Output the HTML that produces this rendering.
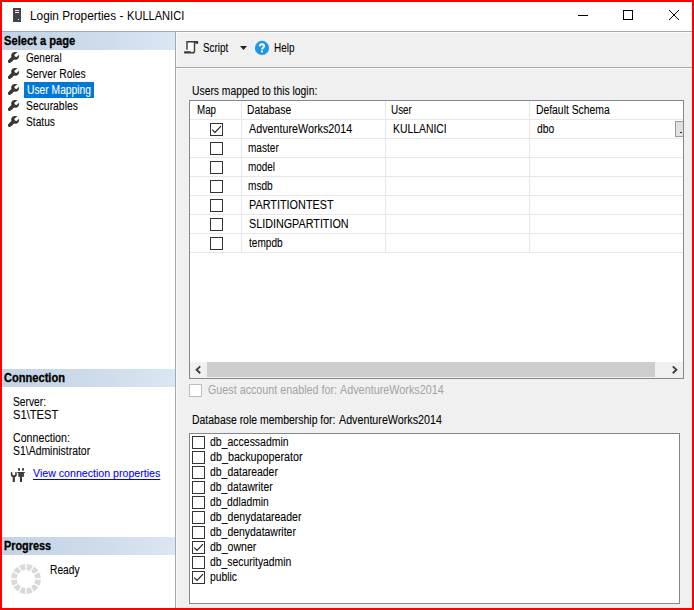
<!DOCTYPE html>
<html>
<head>
<meta charset="utf-8">
<title>Login Properties - KULLANICI</title>
<style>
html,body{margin:0;padding:0;}
body{width:694px;height:610px;overflow:hidden;background:#f0f0f0;position:relative;font-family:"Liberation Sans",sans-serif;font-size:11px;color:#000;}
.a{position:absolute;}
.t{position:absolute;white-space:nowrap;line-height:13px;font-size:12px;transform-origin:0 0;-webkit-text-stroke:0.08px currentColor;}
.b{font-weight:bold;-webkit-text-stroke:0.3px #000;}
.hdr{position:absolute;left:2px;width:173px;height:18px;background:linear-gradient(90deg,#c4d4e5 0%,#cddbea 55%,#dbe6f3 100%);}
.cb{position:absolute;width:11px;height:11px;border:1px solid #333;background:#fff;}
.gl{position:absolute;background:#e7e7e7;}
svg{position:absolute;overflow:visible;}
</style>
</head>
<body>
<!-- ===== title bar ===== -->
<div class="a" style="left:0;top:0;width:694px;height:31px;background:#fff;"></div>
<div class="a" style="left:0;top:31px;width:694px;height:1px;background:#a8a8a8;"></div>
<svg style="left:13px;top:8px;" width="8" height="14" viewBox="0 0 8 14"><rect x="0" y="0" width="8" height="14" fill="#444444"/><rect x="2" y="2" width="4" height="1" fill="#f2f2f2"/><rect x="2" y="4" width="4" height="1" fill="#f2f2f2"/><rect x="5" y="11" width="1" height="1" fill="#f2f2f2"/></svg>
<div class="a" style="left:578px;top:15px;width:10px;height:1px;background:#000;"></div>
<div class="a" style="left:623px;top:10px;width:8px;height:8px;border:1px solid #000;"></div>
<svg style="left:669px;top:10px;" width="10" height="10" viewBox="0 0 10 10"><path d="M0 0 L10 10 M10 0 L0 10" stroke="#000" stroke-width="1" fill="none"/></svg>
<!-- ===== left pane ===== -->
<div class="a" style="left:0;top:32px;width:175px;height:578px;background:#fff;"></div>
<div class="a" style="left:175px;top:32px;width:1px;height:578px;background:#a5a7ae;"></div>
<div class="a" style="left:176px;top:32px;width:1px;height:578px;background:#f9f9f9;"></div>
<div class="a" style="left:176px;top:32px;width:516px;height:1px;background:#fcfcfc;"></div>
<div class="a" style="left:176px;top:68px;width:516px;height:1px;background:#f9f9f9;"></div>
<div class="hdr" style="top:32px;"></div>
<div class="hdr" style="top:369px;"></div>
<div class="hdr" style="top:537px;"></div>
<div class="a" style="left:24px;top:82px;width:70px;height:16px;background:#0078d7;"></div>
<svg style="left:8px;top:52px;" width="11" height="11" viewBox="0 0 11 11"><path d="M9.3 0.4 C7.5 -0.2 4.8 0.1 3.7 1.7 C3.0 2.8 3.0 4.0 3.4 5.1 L0.4 8.1 C-0.3 8.8 -0.2 10.1 0.5 10.7 C1.2 11.3 2.3 11.2 2.9 10.6 L6.1 7.5 C7.4 8.0 9.1 7.8 10.1 6.7 C11.1 5.7 11.4 4.2 10.9 2.8 L9.3 4.6 C8.6 5.2 7.6 5.1 7.0 4.5 C6.4 3.9 6.3 2.9 6.9 2.2 Z" fill="#383935"/></svg>
<svg style="left:8px;top:68px;" width="11" height="11" viewBox="0 0 11 11"><path d="M9.3 0.4 C7.5 -0.2 4.8 0.1 3.7 1.7 C3.0 2.8 3.0 4.0 3.4 5.1 L0.4 8.1 C-0.3 8.8 -0.2 10.1 0.5 10.7 C1.2 11.3 2.3 11.2 2.9 10.6 L6.1 7.5 C7.4 8.0 9.1 7.8 10.1 6.7 C11.1 5.7 11.4 4.2 10.9 2.8 L9.3 4.6 C8.6 5.2 7.6 5.1 7.0 4.5 C6.4 3.9 6.3 2.9 6.9 2.2 Z" fill="#383935"/></svg>
<svg style="left:8px;top:84px;" width="11" height="11" viewBox="0 0 11 11"><path d="M9.3 0.4 C7.5 -0.2 4.8 0.1 3.7 1.7 C3.0 2.8 3.0 4.0 3.4 5.1 L0.4 8.1 C-0.3 8.8 -0.2 10.1 0.5 10.7 C1.2 11.3 2.3 11.2 2.9 10.6 L6.1 7.5 C7.4 8.0 9.1 7.8 10.1 6.7 C11.1 5.7 11.4 4.2 10.9 2.8 L9.3 4.6 C8.6 5.2 7.6 5.1 7.0 4.5 C6.4 3.9 6.3 2.9 6.9 2.2 Z" fill="#383935"/></svg>
<svg style="left:8px;top:100px;" width="11" height="11" viewBox="0 0 11 11"><path d="M9.3 0.4 C7.5 -0.2 4.8 0.1 3.7 1.7 C3.0 2.8 3.0 4.0 3.4 5.1 L0.4 8.1 C-0.3 8.8 -0.2 10.1 0.5 10.7 C1.2 11.3 2.3 11.2 2.9 10.6 L6.1 7.5 C7.4 8.0 9.1 7.8 10.1 6.7 C11.1 5.7 11.4 4.2 10.9 2.8 L9.3 4.6 C8.6 5.2 7.6 5.1 7.0 4.5 C6.4 3.9 6.3 2.9 6.9 2.2 Z" fill="#383935"/></svg>
<svg style="left:8px;top:116px;" width="11" height="11" viewBox="0 0 11 11"><path d="M9.3 0.4 C7.5 -0.2 4.8 0.1 3.7 1.7 C3.0 2.8 3.0 4.0 3.4 5.1 L0.4 8.1 C-0.3 8.8 -0.2 10.1 0.5 10.7 C1.2 11.3 2.3 11.2 2.9 10.6 L6.1 7.5 C7.4 8.0 9.1 7.8 10.1 6.7 C11.1 5.7 11.4 4.2 10.9 2.8 L9.3 4.6 C8.6 5.2 7.6 5.1 7.0 4.5 C6.4 3.9 6.3 2.9 6.9 2.2 Z" fill="#383935"/></svg>
<!-- plug icon -->
<svg style="left:10px;top:468px;" width="16" height="14" viewBox="0 0 16 14"><g fill="#3a3a37"><path d="M0.8 4.8 L1.7 3.8 L2.4 4.4 V6.2 C2.4 7.0 3.1 7.3 3.8 7.3 C4.5 7.3 5.2 7.0 5.2 6.2 V4.4 L5.9 3.8 L6.8 4.8 V6.8 C6.8 8.2 5.9 8.9 4.9 9.2 V14 H2.7 V9.2 C1.7 8.9 0.8 8.2 0.8 6.8 Z"/><rect x="8.1" y="0.1" width="1.8" height="2.6"/><rect x="12.1" y="0.1" width="1.8" height="2.6"/><rect x="7.2" y="4.0" width="7.7" height="1.0"/><rect x="8.3" y="4.8" width="5.6" height="4.1"/><rect x="9.9" y="8.8" width="2.1" height="5.2"/></g></svg>
<!-- spinner -->
<svg style="left:11.2px;top:564px;" width="30" height="30" viewBox="-15 -15 30 30"><g fill="#d9d9d9">
<path d="M0.70 -14.88 A14.9 14.9 0 0 1 6.84 -13.24 L3.93 -8.21 A9.1 9.1 0 0 0 0.70 -9.07 Z"/>
<path d="M8.05 -12.54 A14.9 14.9 0 0 1 12.54 -8.05 L7.51 -5.14 A9.1 9.1 0 0 0 5.14 -7.51 Z"/>
<path d="M13.24 -6.84 A14.9 14.9 0 0 1 14.88 -0.70 L9.07 -0.70 A9.1 9.1 0 0 0 8.21 -3.93 Z"/>
<path d="M14.88 0.70 A14.9 14.9 0 0 1 13.24 6.84 L8.21 3.93 A9.1 9.1 0 0 0 9.07 0.70 Z"/>
<path d="M12.54 8.05 A14.9 14.9 0 0 1 8.05 12.54 L5.14 7.51 A9.1 9.1 0 0 0 7.51 5.14 Z"/>
<path d="M6.84 13.24 A14.9 14.9 0 0 1 0.70 14.88 L0.70 9.07 A9.1 9.1 0 0 0 3.93 8.21 Z"/>
<path d="M-0.70 14.88 A14.9 14.9 0 0 1 -6.84 13.24 L-3.93 8.21 A9.1 9.1 0 0 0 -0.70 9.07 Z"/>
<path d="M-8.05 12.54 A14.9 14.9 0 0 1 -12.54 8.05 L-7.51 5.14 A9.1 9.1 0 0 0 -5.14 7.51 Z"/>
<path d="M-13.24 6.84 A14.9 14.9 0 0 1 -14.88 0.70 L-9.07 0.70 A9.1 9.1 0 0 0 -8.21 3.93 Z"/>
<path d="M-14.88 -0.70 A14.9 14.9 0 0 1 -13.24 -6.84 L-8.21 -3.93 A9.1 9.1 0 0 0 -9.07 -0.70 Z"/>
<path d="M-12.54 -8.05 A14.9 14.9 0 0 1 -8.05 -12.54 L-5.14 -7.51 A9.1 9.1 0 0 0 -7.51 -5.14 Z"/>
<path d="M-6.84 -13.24 A14.9 14.9 0 0 1 -0.70 -14.88 L-0.70 -9.07 A9.1 9.1 0 0 0 -3.93 -8.21 Z"/>
</g></svg>
<!-- ===== toolbar ===== -->
<div class="a" style="left:176px;top:67px;width:516px;height:1px;background:#a5a7ae;"></div>
<svg style="left:184px;top:41px;" width="14" height="13" viewBox="0 0 14 13"><rect x="3.6" y="1.2" width="6.3" height="9.1" fill="#fcfcfc"/><path d="M3 8.7 V0.75 H13.35 V2.8" stroke="#3a3a36" stroke-width="1.4" fill="none"/><path d="M10.5 0.8 V10.2 C10.5 11.6 9.6 11.9 8.6 11.9" stroke="#3a3a36" stroke-width="1.4" fill="none"/><rect x="0.1" y="10.2" width="9.4" height="2.3" rx="0.6" fill="#3a3a36"/><rect x="11.3" y="0.05" width="2.75" height="2.6" fill="#3a3a36"/><rect x="6.9" y="10.1" width="2.0" height="1.0" fill="#fcfcfc"/></svg>
<svg style="left:240px;top:46px;" width="7" height="4" viewBox="0 0 7 4"><path d="M0 0 L7 0 L3.5 4 Z" fill="#222"/></svg>
<svg style="left:255px;top:41px;" width="14" height="14" viewBox="0 0 14 14"><circle cx="7" cy="6.9" r="7.1" fill="#2097e4"/><path d="M4.8 5.2 C4.8 3.9 5.8 3.2 7 3.2 C8.2 3.2 9.2 3.9 9.2 5.0 C9.2 6.4 7.1 6.6 7.1 8.5" stroke="#fff" stroke-width="1.9" fill="none"/><rect x="6.1" y="9.5" width="1.9" height="1.9" fill="#fff"/></svg>
<!-- ===== grid ===== -->
<div class="a" style="left:189px;top:100px;width:493px;height:277px;border:1px solid #828790;background:#fff;"></div>
<div class="gl" style="left:190px;top:119px;width:493px;height:1px;"></div>
<div class="gl" style="left:190px;top:138px;width:493px;height:1px;"></div>
<div class="gl" style="left:190px;top:157px;width:493px;height:1px;"></div>
<div class="gl" style="left:190px;top:176px;width:493px;height:1px;"></div>
<div class="gl" style="left:190px;top:195px;width:493px;height:1px;"></div>
<div class="gl" style="left:190px;top:214px;width:493px;height:1px;"></div>
<div class="gl" style="left:190px;top:233px;width:493px;height:1px;"></div>
<div class="gl" style="left:190px;top:252px;width:493px;height:1px;"></div>
<div class="gl" style="left:241px;top:101px;width:1px;height:152px;"></div>
<div class="gl" style="left:385px;top:101px;width:1px;height:152px;"></div>
<div class="gl" style="left:529px;top:101px;width:1px;height:152px;"></div>
<div class="cb" style="left:210px;top:123px;"></div>
<svg style="left:210px;top:123px;" width="13" height="13" viewBox="0 0 13 13"><path d="M2.2 6.7 L5.0 9.4 L11 3.2" stroke="#1a1a1a" stroke-width="1.1" fill="none"/></svg>
<div class="cb" style="left:210px;top:142px;"></div>
<div class="cb" style="left:210px;top:161px;"></div>
<div class="cb" style="left:210px;top:180px;"></div>
<div class="cb" style="left:210px;top:199px;"></div>
<div class="cb" style="left:210px;top:218px;"></div>
<div class="cb" style="left:210px;top:237px;"></div>
<div class="a" style="left:675px;top:121px;width:8px;height:16px;background:#e1e1e1;border-left:1px solid #9a9aa2;border-top:1px solid #9a9aa2;border-bottom:1px solid #9a9aa2;box-sizing:border-box;"></div><div class="a" style="left:680px;top:132px;width:2px;height:1px;background:#222;"></div>
<div class="a" style="left:190px;top:362px;width:493px;height:16px;background:#f0f0f0;"></div>
<div class="a" style="left:207px;top:362px;width:448px;height:15px;background:#cdcdcd;"></div>
<svg style="left:195px;top:365.7px;" width="6" height="8" viewBox="0 0 6 8"><path d="M5.2 0.4 L1.6 3.8 L5.2 7.2" stroke="#404040" stroke-width="1.9" fill="none"/></svg>
<svg style="left:672px;top:365.7px;" width="6" height="8" viewBox="0 0 6 8"><path d="M0.8 0.4 L4.4 3.8 L0.8 7.2" stroke="#404040" stroke-width="1.9" fill="none"/></svg>
<div class="a" style="left:189px;top:384px;width:11px;height:11px;border:1px solid #bcbcbc;background:#fff;"></div>
<!-- ===== roles ===== -->
<div class="a" style="left:189px;top:433px;width:489px;height:169px;border:1px solid #828790;background:#fff;"></div>
<div class="cb" style="left:192px;top:436px;"></div>
<div class="cb" style="left:192px;top:451px;"></div>
<div class="cb" style="left:192px;top:466px;"></div>
<div class="cb" style="left:192px;top:481px;"></div>
<div class="cb" style="left:192px;top:496px;"></div>
<div class="cb" style="left:192px;top:511px;"></div>
<div class="cb" style="left:192px;top:526px;"></div>
<div class="cb" style="left:192px;top:541px;"></div>
<svg style="left:192px;top:541px;" width="13" height="13" viewBox="0 0 13 13"><path d="M2.2 6.7 L5.0 9.4 L11 3.2" stroke="#1a1a1a" stroke-width="1.1" fill="none"/></svg>
<div class="cb" style="left:192px;top:556px;"></div>
<div class="cb" style="left:192px;top:571px;"></div>
<svg style="left:192px;top:571px;" width="13" height="13" viewBox="0 0 13 13"><path d="M2.2 6.7 L5.0 9.4 L11 3.2" stroke="#1a1a1a" stroke-width="1.1" fill="none"/></svg>
<!-- ===== texts ===== -->
<div class="t " style="left:30.00px;top:9px;font-size:12px;line-height:15px;-webkit-text-stroke:0;transform:scaleX(0.9853);">Login Properties -</div>
<div class="t " style="left:127.42px;top:9px;font-size:12px;line-height:15px;-webkit-text-stroke:0;transform:scaleX(0.9232);">KULLANICI</div>
<div class="t b" style="left:4.35px;top:35px;transform:scaleX(0.9283);">Select a page</div>
<div class="t " style="left:25.62px;top:52px;transform:scaleX(0.8351);">General</div>
<div class="t " style="left:26.06px;top:68px;transform:scaleX(0.8611);">Server Roles</div>
<div class="t " style="left:27.39px;top:84px;color:#fff;transform:scaleX(0.8573);">User Mapping</div>
<div class="t " style="left:26.15px;top:100px;transform:scaleX(0.8642);">Securables</div>
<div class="t " style="left:26.14px;top:116px;transform:scaleX(0.8493);">Status</div>
<div class="t b" style="left:4.17px;top:372px;transform:scaleX(0.9239);">Connection</div>
<div class="t " style="left:13.15px;top:396px;transform:scaleX(0.8539);">Server:</div>
<div class="t " style="left:13.18px;top:409px;transform:scaleX(0.9287);">S1\TEST</div>
<div class="t " style="left:12.61px;top:432px;transform:scaleX(0.8876);">Connection:</div>
<div class="t " style="left:13.00px;top:445px;transform:scaleX(0.8697);">S1\Administrator</div>
<div class="t " style="left:32.60px;top:467px;font-size:11px;color:#0000ff;text-decoration:underline;text-underline-offset:2px;text-decoration-thickness:1px;transform:scaleX(0.9652);">View connection properties</div>
<div class="t b" style="left:4.33px;top:540px;transform:scaleX(0.9039);">Progress</div>
<div class="t " style="left:49.84px;top:564px;transform:scaleX(0.8517);">Ready</div>
<div class="t " style="left:203.08px;top:42px;transform:scaleX(0.8229);">Script</div>
<div class="t " style="left:274.05px;top:42px;transform:scaleX(0.8278);">Help</div>
<div class="t " style="left:192.07px;top:85px;transform:scaleX(0.8614);">Users mapped to this login:</div>
<div class="t " style="left:196.69px;top:104px;transform:scaleX(0.8158);">Map</div>
<div class="t " style="left:247.45px;top:104px;transform:scaleX(0.8609);">Database</div>
<div class="t " style="left:391.45px;top:104px;transform:scaleX(0.8249);">User</div>
<div class="t " style="left:536.22px;top:104px;transform:scaleX(0.8628);">Default Schema</div>
<div class="t " style="left:248.78px;top:123px;transform:scaleX(0.8957);">AdventureWorks2014</div>
<div class="t " style="left:248.08px;top:142px;transform:scaleX(0.8378);">master</div>
<div class="t " style="left:248.07px;top:161px;transform:scaleX(0.8269);">model</div>
<div class="t " style="left:248.05px;top:180px;transform:scaleX(0.8429);">msdb</div>
<div class="t " style="left:248.78px;top:199px;transform:scaleX(0.9043);">PARTITIONTEST</div>
<div class="t " style="left:248.78px;top:218px;transform:scaleX(0.8982);">SLIDINGPARTITION</div>
<div class="t " style="left:248.91px;top:237px;transform:scaleX(0.8416);">tempdb</div>
<div class="t " style="left:393.06px;top:123px;transform:scaleX(0.8657);">KULLANICI</div>
<div class="t " style="left:536.83px;top:123px;transform:scaleX(0.8608);">dbo</div>
<div class="t " style="left:207.84px;top:384px;color:#a3a3a3;-webkit-text-stroke:0;transform:scaleX(0.8954);">Guest account enabled for:</div>
<div class="t " style="left:339.92px;top:384px;color:#a3a3a3;-webkit-text-stroke:0;transform:scaleX(0.9006);">AdventureWorks2014</div>
<div class="t " style="left:192.23px;top:414px;transform:scaleX(0.8709);">Database role membership for:</div>
<div class="t " style="left:338.56px;top:414px;transform:scaleX(0.8931);">AdventureWorks2014</div>
<div class="t " style="left:210.22px;top:436px;transform:scaleX(0.8734);">db_accessadmin</div>
<div class="t " style="left:210.22px;top:451px;transform:scaleX(0.8952);">db_backupoperator</div>
<div class="t " style="left:210.22px;top:466px;transform:scaleX(0.8693);">db_datareader</div>
<div class="t " style="left:210.22px;top:481px;transform:scaleX(0.8617);">db_datawriter</div>
<div class="t " style="left:210.23px;top:496px;transform:scaleX(0.8551);">db_ddladmin</div>
<div class="t " style="left:210.22px;top:511px;transform:scaleX(0.8789);">db_denydatareader</div>
<div class="t " style="left:210.22px;top:526px;transform:scaleX(0.8697);">db_denydatawriter</div>
<div class="t " style="left:210.23px;top:541px;transform:scaleX(0.8775);">db_owner</div>
<div class="t " style="left:210.23px;top:556px;transform:scaleX(0.8649);">db_securityadmin</div>
<div class="t " style="left:210.23px;top:571px;transform:scaleX(0.8626);">public</div>
<!-- ===== red frame ===== -->
<div class="a" style="left:0;top:0;width:694px;height:2px;background:#ff0000;"></div>
<div class="a" style="left:0;top:608px;width:694px;height:2px;background:#ff0000;"></div>
<div class="a" style="left:0;top:0;width:2px;height:610px;background:#ff0000;"></div>
<div class="a" style="left:692px;top:0;width:2px;height:610px;background:#ff0000;"></div>
</body>
</html>
